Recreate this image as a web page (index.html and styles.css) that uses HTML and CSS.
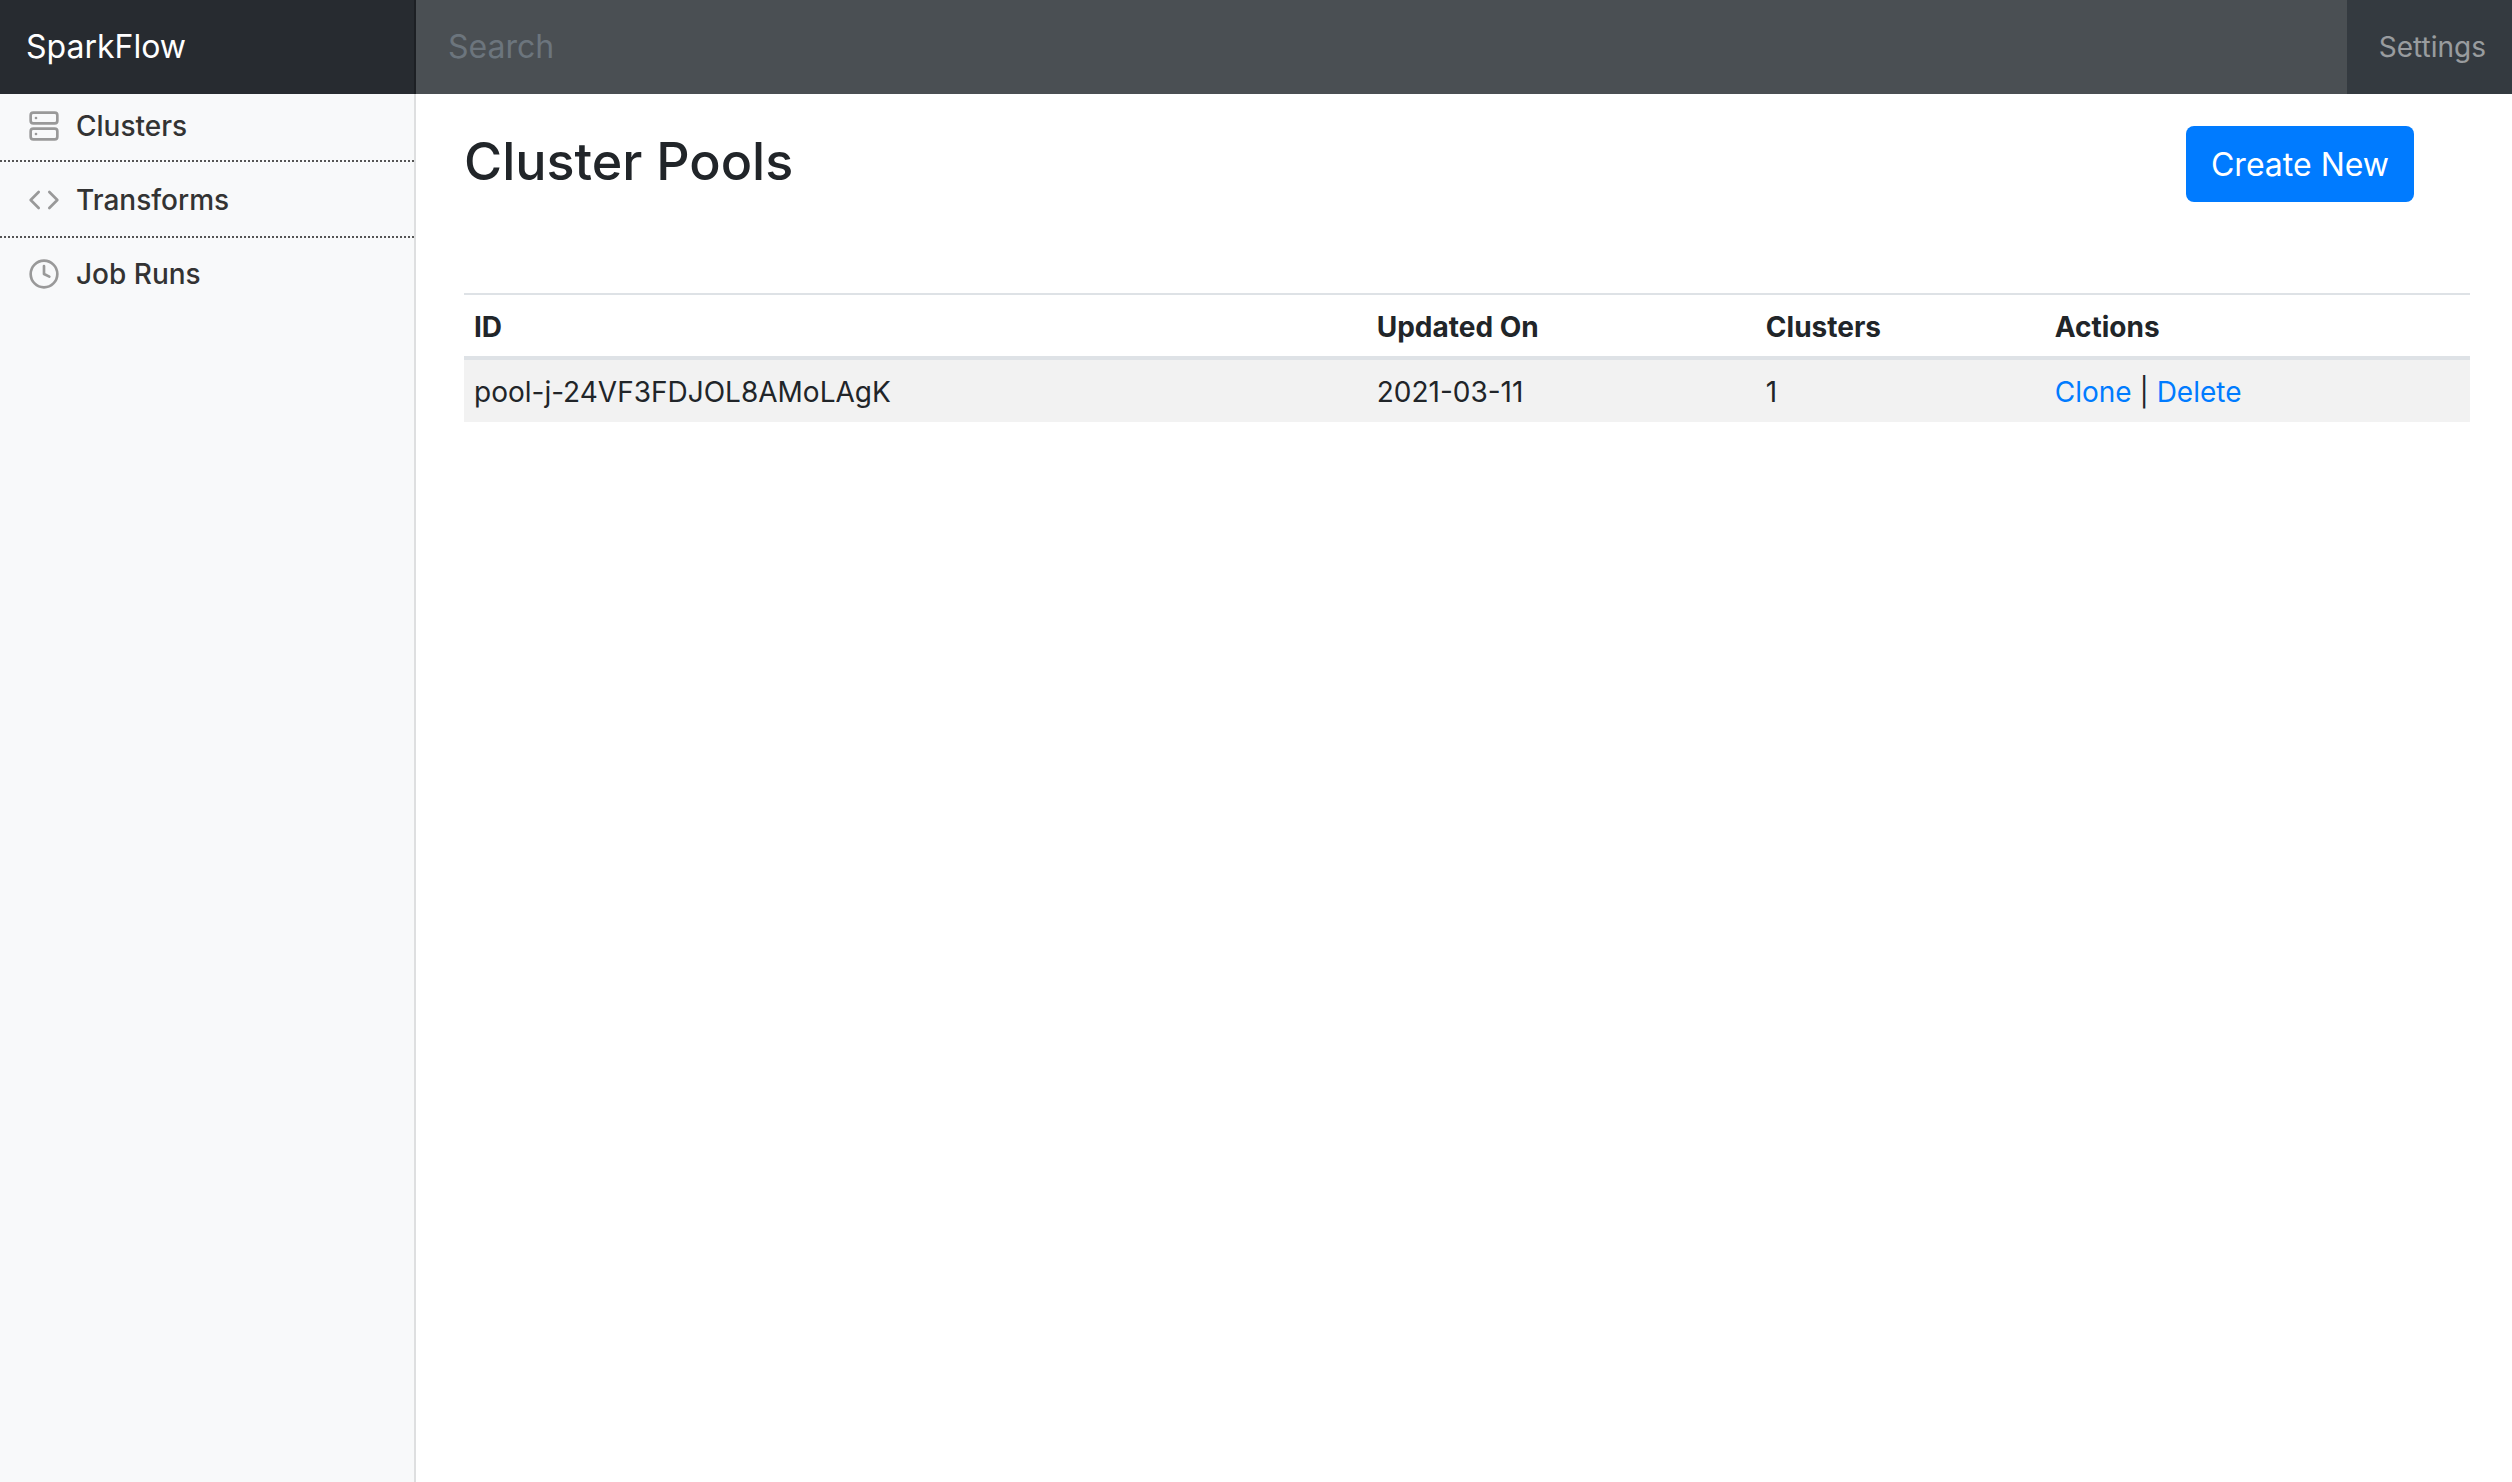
FILE: index.html
```html
<!DOCTYPE html>
<html lang="en">
<head>
<meta charset="utf-8">
<meta name="viewport" content="width=device-width, initial-scale=1">
<title>SparkFlow</title>
<link rel="stylesheet" href="styles.css">
</head>
<body>
<header class="navbar">
  <a class="brand" href="#">SparkFlow</a>
  <input class="search" type="search" placeholder="Search" aria-label="Search">
  <a class="settings" href="#">Settings</a>
</header>
<div class="layout">
  <nav class="sidebar" aria-label="Main">
    <ul class="menu">
      <li class="menu-item">
        <a class="menu-link" href="#">
          <svg class="icon" viewBox="0 0 24 24" aria-hidden="true"><rect x="2" y="2" width="20" height="8" rx="2"/><rect x="2" y="14" width="20" height="8" rx="2"/><path d="M6 6h.01M6 18h.01"/></svg>
          Clusters
        </a>
      </li>
      <li class="menu-item">
        <a class="menu-link" href="#">
          <svg class="icon" viewBox="0 0 24 24" aria-hidden="true"><path d="M16 18l6-6-6-6M8 6l-6 6 6 6"/></svg>
          Transforms
        </a>
      </li>
      <li class="menu-item">
        <a class="menu-link" href="#">
          <svg class="icon" viewBox="0 0 24 24" aria-hidden="true"><circle cx="12" cy="12" r="10"/><path d="M12 6v6l4 2"/></svg>
          Job Runs
        </a>
      </li>
    </ul>
  </nav>
  <main class="content">
    <div class="page-head">
      <h1 class="title">Cluster Pools</h1>
      <button class="btn" type="button">Create New</button>
    </div>
    <table class="table">
      <colgroup><col class="col-id"><col class="col-updated"><col class="col-clusters"><col></colgroup>
      <thead>
        <tr><th scope="col">ID</th><th scope="col">Updated On</th><th scope="col">Clusters</th><th scope="col">Actions</th></tr>
      </thead>
      <tbody>
        <tr>
          <td>pool-j-24VF3FDJOL8AMoLAgK</td>
          <td>2021-03-11</td>
          <td>1</td>
          <td><a href="#">Clone</a> | <a href="#">Delete</a></td>
        </tr>
      </tbody>
    </table>
  </main>
</div>
</body>
</html>
```
FILE: styles.css
```css
* {
  box-sizing: border-box;
}

body {
  margin: 0;
  min-height: 100vh;
  display: flex;
  flex-direction: column;
  background: #fff;
  color: #212529;
  font: 28px/42px Inter, "Liberation Sans", sans-serif;
}

a {
  color: #007bff;
  text-decoration: none;
}

.navbar {
  display: grid;
  grid-template-columns: 416px 1fr auto;
  background: #343a40;
  line-height: 46px;
}

.brand {
  padding: 24px 26px;
  background: rgba(0, 0, 0, .25);
  box-shadow: inset -2px 0 0 rgba(0, 0, 0, .25);
  color: #fff;
  font-size: 32px;
}

.search {
  min-width: 0;
  padding: 24px 32px;
  border: 0;
  border-radius: 0;
  outline: 0;
  appearance: none;
  background: #4a4f53;
  color: #fff;
  font: inherit;
  font-size: 32px;
}

.search::placeholder {
  color: #6c757d;
  opacity: 1;
}

.settings {
  padding: 24px 26px 24px 32px;
  color: rgba(255, 255, 255, .5);
}

.layout {
  flex: 1;
  display: grid;
  grid-template-columns: 416px 1fr;
}

.sidebar {
  background: #f8f9fa;
  box-shadow: inset -2px 0 0 rgba(0, 0, 0, .1);
}

.menu {
  margin: 0;
  padding: 0 2px 0 0;
  list-style: none;
}

.menu-item + .menu-item {
  border-top: 2px dotted #555;
}

.menu-link {
  display: flex;
  align-items: center;
  gap: 16px;
  padding: 17px 28px 15px;
  color: #333;
  font-weight: 500;
}

.menu-item:first-child .menu-link {
  padding: 11px 28px 13px;
}

.menu-item:last-child .menu-link {
  padding: 15px 28px 17px;
}

.icon {
  width: 32px;
  height: 32px;
  fill: none;
  stroke: #999;
  stroke-width: 2;
  stroke-linecap: round;
  stroke-linejoin: round;
}

.content {
  padding: 32px 42px 48px 48px;
}

.page-head {
  display: flex;
  justify-content: space-between;
  align-items: flex-start;
  margin-bottom: 91px;
  padding-right: 56px;
}

.title {
  margin: 0;
  font-size: 52px;
  line-height: 72px;
  font-weight: 500;
}

.btn {
  padding: 15px 25px 13px;
  border: 0;
  border-radius: 8px;
  background: #007bff;
  color: #fff;
  font: inherit;
  font-size: 32px;
  line-height: 48px;
}

.table {
  width: 100%;
  border-spacing: 0;
  table-layout: fixed;
}

.col-id {
  width: 45%;
}

.col-updated {
  width: 19.4%;
}

.col-clusters {
  width: 14.4%;
}

.table th,
.table td {
  padding: 11px 10px 9px;
  text-align: left;
}

.table th {
  padding-bottom: 8px;
  border-top: 2px solid #dee2e6;
  border-bottom: 4px solid #dee2e6;
  font-weight: 700;
}

.table td {
  background: #f2f2f2;
}
```
